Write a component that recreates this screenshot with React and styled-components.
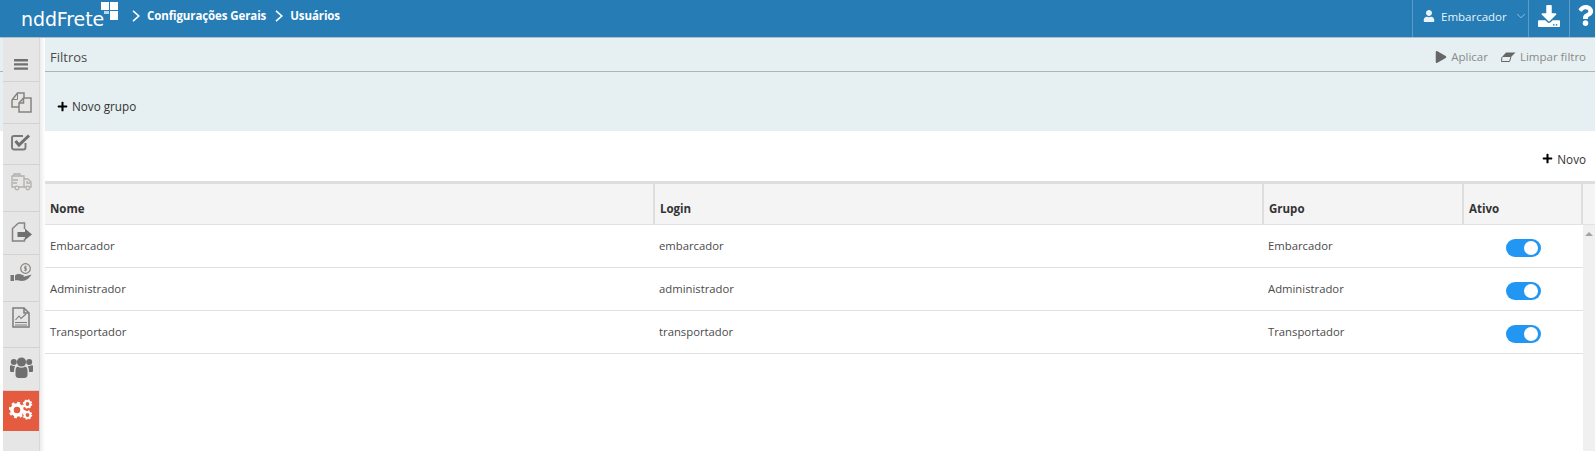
import React from 'react'
import styled, { createGlobalStyle } from 'styled-components'
import { FaDownload, FaPlay, FaPlus, FaQuestion, FaUser } from 'react-icons/fa'
import { ChevronDown } from 'lucide-react'

const GlobalStyle = createGlobalStyle`
    html, body {
        margin: 0;
        height: 100%;
        overflow: hidden;
        background: #fff;
    }
    body {
        font-family: "Open Sans", "Noto Sans", sans-serif;
        font-size: 11.3px;
        color: #3d3d3d;
    }
`

const users = [
    { nome: 'Embarcador', login: 'embarcador', grupo: 'Embarcador' },
    { nome: 'Administrador', login: 'administrador', grupo: 'Administrador' },
    { nome: 'Transportador', login: 'transportador', grupo: 'Transportador' },
]

function BarsIcon() {
    return (
        <svg width="14" height="11" viewBox="0 0 14 11" fill="#707070">
            <rect width="14" height="2.4" rx="0.5" />
            <rect y="4.2" width="14" height="2.4" rx="0.5" />
            <rect y="8.4" width="14" height="2.4" rx="0.5" />
        </svg>
    )
}

function CopyIcon() {
    return (
        <svg width="21" height="21" viewBox="0 0 21 21" fill="none" stroke="#87827f" strokeWidth="1.5">
            <path d="M1 8 6.5 1H13V6" />
            <path d="M1 8V15H8" />
            <path d="M8 11 12.5 6H20V20H8Z" />
            <path d="M12.5 6V11H8" />
            <path d="M6.5 1V7.5H1" strokeWidth="1" />
        </svg>
    )
}

function CheckIcon() {
    return (
        <svg width="20" height="17" viewBox="0 0 20 17" fill="none">
            <path d="M14.5 9V13.5A2 2 0 0 1 12.5 15.5H3A2 2 0 0 1 1 13.5V4A2 2 0 0 1 3 2H12" stroke="#7a7a7a" strokeWidth="1.9" />
            <path d="M4.5 7 8 11 18 1.5" stroke="#6f6f6f" strokeWidth="3" />
        </svg>
    )
}

function TruckIcon() {
    return (
        <svg width="21" height="18" viewBox="0 0 21 18" fill="none" stroke="#b3b0ac" strokeWidth="1.3">
            <path d="M4 14H1V3H13V14H8" />
            <path d="M3 3V1H9V3" />
            <path d="M13 6H17L20 9V14H18.5M15 14H13" />
            <path d="M2 7H7M2 10H6" />
            <path d="M16 8V10H19" />
            <circle cx="6" cy="15" r="1.8" />
            <circle cx="16.8" cy="15" r="1.8" />
        </svg>
    )
}

function ExitIcon() {
    return (
        <svg width="21" height="20" viewBox="0 0 21 20" fill="none">
            <path d="M7.5 1 1.5 6.5V19H13.5V16.5M13.5 7V1H7.5" stroke="#87827f" strokeWidth="1.5" />
            <path d="M6.5 10H14V6.500L21 12.500 14 18V15H6.500Z" fill="#6f6f6f" />
        </svg>
    )
}

function HandIcon() {
    return (
        <svg width="22" height="19" viewBox="0 0 22 19" fill="none">
            <circle cx="15.5" cy="5.5" r="4.8" stroke="#87827f" strokeWidth="1.2" />
            <path d="M17 3.8H14.5V5.5H16.5V7.2H14M15.5 2.6V8.4" stroke="#87827f" strokeWidth="0.8" />
            <rect x="0.5" y="12" width="3.5" height="6" fill="#777" />
            <path d="M5 12.5C8 10 10 11.5 13 12 14.5 12.5 14 14 12 14H10C13 14.5 16 13 21.5 11.5 20 14.5 16 18 12 18 9 18 7 17 5 17.5Z" fill="#777" />
        </svg>
    )
}

function ReportIcon() {
    return (
        <svg width="18" height="21" viewBox="0 0 18 21" fill="none" stroke="#7c7c7c" strokeWidth="1.5">
            <path d="M1 1H12L17 6V20H1Z" />
            <path d="M12 1V6H17" />
            <path d="M3.5 13 7 9 9 11.5 14 7" strokeWidth="1.1" />
            <path d="M3 15.5H15M3 18H15" strokeWidth="1" />
        </svg>
    )
}

function UsersIcon() {
    return (
        <svg width="23" height="21" viewBox="0 0 23 21" fill="#6f6f6f">
            <circle cx="3.8" cy="5" r="3" />
            <circle cx="19.2" cy="5" r="3" />
            <path d="M0 9.5C0 8.5 1 8 2 8.6 3 9.2 4.5 9.2 5.2 9 4.2 11 4 13 4 15H1.5C0.5 15 0 14.5 0 13.5Z" />
            <path d="M23 9.5C23 8.5 22 8 21 8.6 20 9.2 18.5 9.2 17.8 9 18.8 11 19 13 19 15H21.5C22.5 15 23 14.5 23 13.5Z" />
            <circle cx="11.5" cy="5" r="4.6" />
            <path d="M5.5 14C5.5 11.5 6.5 9.5 8 9.8 10 11.2 13 11.2 15 9.8 16.5 9.5 17.5 11.5 17.5 14V18C17.5 19.8 16 21 14.5 21H8.500C7 21 5.500 19.800 5.500 18Z" />
        </svg>
    )
}

function Gear({ cx, cy, r }) {
    const tooth = (2 * Math.PI * r) / 16
    return (
        <>
            <circle cx={cx} cy={cy} r={r * 0.72} fill="none" stroke="#fff" strokeWidth={r * 0.5} />
            <circle cx={cx} cy={cy} r={r} fill="none" stroke="#fff" strokeWidth={r * 0.38} strokeDasharray={`${tooth} ${tooth}`} />
        </>
    )
}

function CogsIcon() {
    return (
        <svg width="24" height="21" viewBox="0 0 24 21">
            <Gear cx={8} cy={11} r={7} />
            <Gear cx={18.5} cy={5} r={4} />
            <Gear cx={18.5} cy={16} r={4} />
        </svg>
    )
}

function EraserIcon() {
    return (
        <svg width="15" height="10" viewBox="0 0 15 10" fill="none">
            <path d="M5 .5H14.5L10 5H1Z" fill="#666" />
            <path d="M1 5 .7 7 .5 9.500H8.500L10 5" stroke="#666" strokeWidth="1" />
        </svg>
    )
}

function Caret() {
    return (
        <svg width="8" height="12" viewBox="0 0 8 12" fill="none" stroke="#fff" strokeWidth="1.6">
            <path d="M1 .8 6.800 6 1 11.200" />
        </svg>
    )
}

function LogoMark() {
    return (
        <svg width="18" height="18" viewBox="0 0 18 18">
            <rect x="0" y="0" width="8" height="8" fill="#fff" />
            <rect x="9" y="0" width="8" height="8" fill="#fff" />
            <rect x="3" y="9" width="5" height="3" fill="#bcd6e6" />
            <rect x="9" y="9" width="8" height="9" fill="#fff" />
        </svg>
    )
}

const sideItems = [
    { height: 44, lift: -9, icon: <BarsIcon /> },
    { height: 42, lift: 0, icon: <CopyIcon /> },
    { height: 41, lift: 3, icon: <CheckIcon /> },
    { height: 47, lift: 13, icon: <TruckIcon /> },
    { height: 43, lift: 2, icon: <ExitIcon /> },
    { height: 47, lift: 12, icon: <HandIcon /> },
    { height: 46, lift: 14, icon: <ReportIcon /> },
    { height: 43, lift: 4, icon: <UsersIcon /> },
    { height: 40, lift: 3, icon: <CogsIcon />, active: true },
]

function App() {
    return (
        <>
            <GlobalStyle />
            <Page>
                <Header>
                    <Brand>
                        <LogoText>nddFrete</LogoText>
                        <LogoMark />
                    </Brand>
                    <Crumbs>
                        <Caret />
                        <span>Configurações Gerais</span>
                        <Caret />
                        <span>Usuários</span>
                    </Crumbs>
                    <HeaderActions>
                        <UserMenu>
                            <FaUser size={12} />
                            <span>Embarcador</span>
                            <ChevronDown size={14} strokeWidth={1.2} />
                        </UserMenu>
                        <HeaderButton $width={41}><FaDownload size={22} /></HeaderButton>
                        <HeaderButton $width={25}><FaQuestion size={21} /></HeaderButton>
                    </HeaderActions>
                </Header>

                <Sidebar>
                    {sideItems.map((item, i) => (
                        <SideItem key={i} $height={item.height} $lift={item.lift} $active={item.active}>{item.icon}</SideItem>
                    ))}
                </Sidebar>

                <Main>
                    <FilterPanel>
                        <FilterBar>
                            <FilterTitle>Filtros</FilterTitle>
                            <FilterActions>
                                <FilterAction><FaPlay size={12} />Aplicar</FilterAction>
                                <FilterAction><EraserIcon />Limpar filtro</FilterAction>
                            </FilterActions>
                        </FilterBar>
                        <FilterBody>
                            <AddLink><FaPlus size={11} color="#000" />Novo grupo</AddLink>
                        </FilterBody>
                    </FilterPanel>

                    <Toolbar>
                        <AddLink><FaPlus size={11} color="#000" />Novo</AddLink>
                    </Toolbar>

                    <TableHead>
                        <HeadCell>Nome</HeadCell>
                        <HeadCell>Login</HeadCell>
                        <HeadCell>Grupo</HeadCell>
                        <HeadCell>Ativo</HeadCell>
                        <span />
                    </TableHead>

                    <TableBody>
                        <Rows>
                            {users.map((user) => (
                                <Row key={user.login}>
                                    <Cell>{user.nome}</Cell>
                                    <Cell>{user.login}</Cell>
                                    <Cell>{user.grupo}</Cell>
                                    <ToggleCell><Toggle /></ToggleCell>
                                </Row>
                            ))}
                        </Rows>
                        <Scrollbar><ScrollArrow /></Scrollbar>
                    </TableBody>
                </Main>
            </Page>
        </>
    )
}

const COLUMNS = '610px 609px 200px 119px'

const Page = styled.div`
    position: relative;
    display: flex;
    flex-direction: column;
    width: 1595px;
    height: 451px;
    overflow: hidden;
`

const Header = styled.header`
    display: flex;
    align-items: stretch;
    flex: 0 0 38px;
    box-sizing: border-box;
    background: #267cb5;
    border-bottom: 1px solid #b4bfc4;
    color: #fff;
`

const Brand = styled.div`
    display: flex;
    align-items: flex-start;
    width: 119px;
    padding: 2px 0 0 21px;
    box-sizing: border-box;
    svg {
        margin-left: -3px;
        flex: none;
    }
`

const LogoText = styled.span`
    font-family: "DejaVu Sans", sans-serif;
    font-size: 19px;
    font-weight: 400;
    line-height: 30px;
    letter-spacing: -0.1px;
    margin-top: 2px;
`

const Crumbs = styled.nav`
    display: flex;
    align-items: center;
    gap: 7px;
    margin-left: 13px;
    font-size: 11.5px;
    font-weight: 700;
    letter-spacing: -0.1px;
    padding-bottom: 6px;
    span + svg {
        margin-left: 2px;
    }
`

const HeaderActions = styled.div`
    display: flex;
    margin-left: auto;
`

const UserMenu = styled.div`
    display: flex;
    align-items: center;
    gap: 6px;
    width: 117px;
    padding: 0 0 5px 10px;
    box-sizing: border-box;
    font-size: 11.5px;
    color: #eaf3f9;
    border-left: 1px solid #5a9bc8;
    border-right: 1px solid #5a9bc8;
    svg:last-child {
        margin-left: 1px;
        opacity: 0.8;
    }
`

const HeaderButton = styled.div`
    display: flex;
    align-items: center;
    justify-content: center;
    width: ${(p) => p.$width}px;
    padding: 0 0 6px ${(p) => (p.$width > 30 ? 0 : 6)}px;
    box-sizing: border-box;
    border-right: ${(p) => (p.$width > 30 ? '1px solid #5a9bc8' : 'none')};
`

const Sidebar = styled.aside`
    position: absolute;
    top: 38px;
    left: 3px;
    bottom: 0;
    width: 36px;
    background: #e6e6e6;
    border-right: 1px solid #d8d8d8;
    &::after {
        content: '';
        position: absolute;
        top: 0;
        bottom: 0;
        left: 37px;
        width: 5px;
        background: linear-gradient(90deg, #ececec, #fff);
    }
`

const SideItem = styled.div`
    display: flex;
    align-items: center;
    justify-content: center;
    height: ${(p) => p.$height}px;
    box-sizing: border-box;
    padding: ${(p) => (p.$lift < 0 ? -p.$lift : 0)}px 0 ${(p) => (p.$lift > 0 ? p.$lift : 0)}px;
    background: ${(p) => (p.$active ? '#e45b3f' : 'transparent')};
    border-bottom: ${(p) => (p.$active ? 'none' : '1px solid #d2d2d2')};
`

const Main = styled.main`
    display: flex;
    flex-direction: column;
    flex: 1;
    min-height: 0;
`

const FilterPanel = styled.section`
    background: #e6f0f2;
`

const FilterBar = styled.div`
    display: flex;
    align-items: center;
    justify-content: space-between;
    height: 34px;
    box-sizing: border-box;
    padding: 4px 9px 0 50px;
    border-bottom: 1px solid #adb5b5;
`

const FilterTitle = styled.span`
    font-size: 13px;
    color: #4a4a4a;
`

const FilterActions = styled.div`
    display: flex;
    gap: 13px;
`

const FilterAction = styled.span`
    display: flex;
    align-items: center;
    gap: 4px;
    color: #8a8a8a;
    font-size: 11.5px;
    svg {
        color: #666;
    }
`

const FilterBody = styled.div`
    display: flex;
    align-items: center;
    height: 59px;
    box-sizing: border-box;
    padding: 9px 0 0 57px;
`

const AddLink = styled.span`
    display: flex;
    align-items: center;
    gap: 4px;
    color: #333;
    font-size: 11.7px;
`

const Toolbar = styled.div`
    display: flex;
    justify-content: flex-end;
    align-items: center;
    height: 50px;
    padding: 5px 9px 0 0;
    box-sizing: border-box;
`

const TableHead = styled.div`
    display: grid;
    grid-template-columns: ${COLUMNS} 1fr;
    height: 44px;
    box-sizing: border-box;
    margin-left: 45px;
    background: #f4f4f4;
    border-top: 3px solid #dedede;
    border-bottom: 1px solid #e2e2e2;
`

const HeadCell = styled.div`
    display: flex;
    align-items: center;
    padding: 8px 0 0 5px;
    font-weight: 700;
    font-size: 11.5px;
    color: #333;
    border-right: 2px solid #dedede;
`

const TableBody = styled.div`
    display: flex;
    flex: 1;
    margin-left: 45px;
    min-height: 0;
`

const Rows = styled.div`
    width: 1538px;
`

const Row = styled.div`
    display: grid;
    grid-template-columns: ${COLUMNS};
    height: 43px;
    box-sizing: border-box;
    border-bottom: 1px solid #dfdfdf;
`

const Cell = styled.div`
    display: flex;
    align-items: center;
    padding: 0 0 1px 5px;
    color: #4a4a4a;
    & + & {
        padding-left: 4px;
    }
`

const ToggleCell = styled.div`
    display: flex;
    align-items: center;
    padding: 4px 0 0 42px;
`

const Toggle = styled.div`
    position: relative;
    width: 35px;
    height: 18px;
    border-radius: 9px;
    background: #2196f3;
    &::after {
        content: '';
        position: absolute;
        top: 2px;
        right: 3px;
        width: 14px;
        height: 14px;
        border-radius: 50%;
        background: #fff;
    }
`

const Scrollbar = styled.div`
    flex: 1;
    background: #f0f0f0;
    padding-top: 7px;
`

const ScrollArrow = styled.div`
    width: 0;
    height: 0;
    margin: 0 auto;
    border-left: 4px solid transparent;
    border-right: 4px solid transparent;
    border-bottom: 4px solid #a3a3a3;
`

export default App
